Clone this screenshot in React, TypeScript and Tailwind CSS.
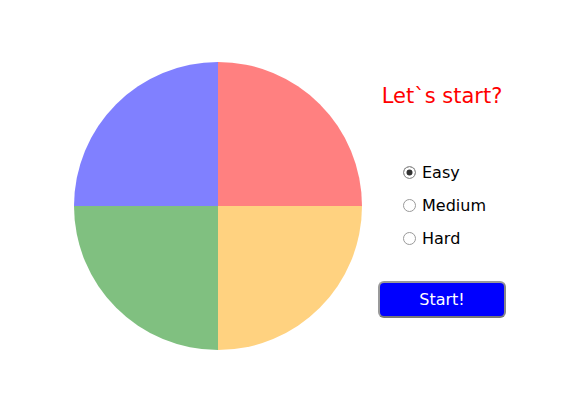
import React from 'react';

const font = { fontFamily: '"DejaVu Sans", sans-serif' };

function Pie() {
  // quarters of a 288px disc, drawn from the center
  const r = 144;
  return (
    <svg width={288} height={288} viewBox="0 0 288 288" className="shrink-0">
      <path d={`M${r} ${r} L${r} 0 A${r} ${r} 0 0 1 ${2 * r} ${r} Z`} fill="#ff8080" />
      <path d={`M${r} ${r} L${2 * r} ${r} A${r} ${r} 0 0 1 ${r} ${2 * r} Z`} fill="#ffd280" />
      <path d={`M${r} ${r} L${r} ${2 * r} A${r} ${r} 0 0 1 0 ${r} Z`} fill="#80c080" />
      <path d={`M${r} ${r} L0 ${r} A${r} ${r} 0 0 1 ${r} 0 Z`} fill="#8080ff" />
    </svg>
  );
}

const levels = ['Easy', 'Medium', 'Hard'];

export default function App() {
  return (
    <div className="w-[573px] h-[416px] bg-white flex items-start pt-[62px] pl-[74px]" style={font}>
      <Pie />
      <div className="ml-[16px] w-[128px] flex flex-col">
        <h1 className="mt-[22px] text-[21px] leading-[24px] text-[#ff0000] text-center whitespace-nowrap">Let`s start?</h1>
        <div className="mt-[48px] pl-[25px] flex flex-col">
          {levels.map((l, i) => (
            <label key={l} className="h-[33px] flex items-center gap-[6px] text-[16px] text-black">
              <input
                type="radio"
                name="level"
                defaultChecked={i === 0}
                className="m-0 w-[13px] h-[13px] appearance-none rounded-full border border-[#9a9a9a] bg-white checked:bg-[#333] checked:shadow-[inset_0_0_0_2.5px_white]"
              />
              <span>{l}</span>
            </label>
          ))}
        </div>
        <button className="mt-[26px] w-[128px] h-[37px] rounded-[6px] border-2 border-[#9a9a9a] border-b-[#777] border-r-[#888] bg-[#0000ff] text-white text-[16px]">
          Start!
        </button>
      </div>
    </div>
  );
}
